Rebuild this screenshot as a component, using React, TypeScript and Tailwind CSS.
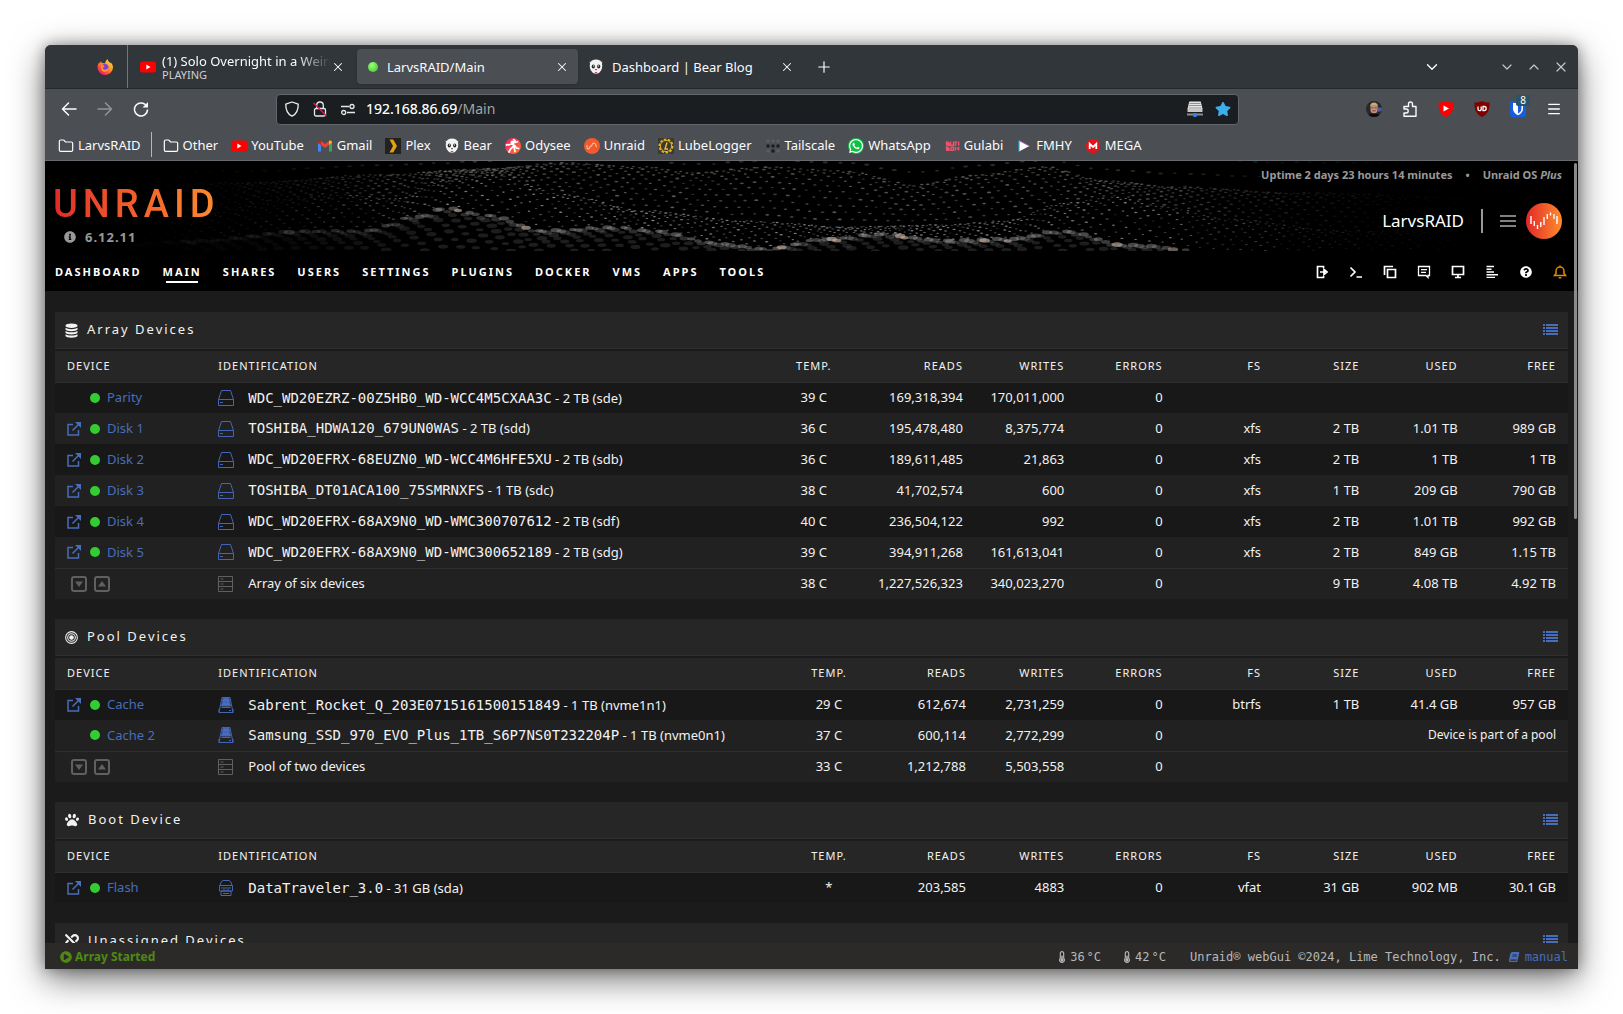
import React from "react";
import { FaBook, FaInfoCircle, FaPaw, FaPlayCircle, FaQuestionCircle, FaStar, FaThermometerHalf, FaUnlink, FaWhatsapp } from "react-icons/fa";
import { ChevronDown, ChevronUp, Folder, Menu, Plus, X } from "lucide-react";

/* ---------- small drawings ---------- */

const YouTubeIcon = () => (
  <svg viewBox="0 0 16 16" className="size-4">
    <rect y="2.5" width="16" height="11" rx="2.5" fill="#f00" />
    <path d="M6.3 5.6v4.8L10.5 8z" fill="#fff" />
  </svg>
);

const BearIcon = () => (
  <svg viewBox="0 0 16 16" className="size-4">
    <path d="M2 4.500C1 2.500 2.500 1 4 1.500 6.500.3 9.500.3 12 1.500c1.500-.5 3 1 2 3 .7 3.500 0 6.500-2.500 9-2 1.700-5 1.700-7 0C2 11 1.300 8 2 4.500z" fill="#f2f2f2" />
    <path d="M4 1.500Q2 .8 1.800 3.500z" fill="#222" />
    <path d="M12 1.500Q14 .8 14.200 3.500z" fill="#222" />
    <ellipse cx="5.300" cy="7.500" rx="1.600" ry="2" fill="#222" />
    <ellipse cx="10.700" cy="7.500" rx="1.600" ry="2" fill="#222" />
    <circle cx="5.500" cy="7" r=".7" fill="#ddd" />
    <circle cx="10.500" cy="7" r=".7" fill="#ddd" />
    <path d="M6.800 10.300h2.400L8 11.600z" fill="#222" />
    <path d="M6.800 13h2.400v1.200H6.800z" fill="#e04055" />
  </svg>
);

const FirefoxIcon = () => (
  <svg viewBox="0 0 16 16" className="size-4">
    <defs>
      <linearGradient id="fox" x1="1" y1="0" x2=".2" y2="1">
        <stop offset="0" stopColor="#fff044" />
        <stop offset=".45" stopColor="#ff9a1f" />
        <stop offset=".8" stopColor="#ff3750" />
        <stop offset="1" stopColor="#e5178c" />
      </linearGradient>
    </defs>
    <path d="M10.500 0c.2 1.800 1.200 2.600 2.300 3.500.4.300.7.700.9 1.100.1-.4.100-.9 0-1.300 1.400 1.400 2.300 3.300 2.300 5.200A7.700 7.700 0 0 1 8.200 16 7.700 7.700 0 0 1 .5 8.400C.5 6.400 1.100 4.500 2.300 3.200c0 .5.100 1 .3 1.300.3-.8.900-1.600 1.600-2.200 0 .7.200 1.200.6 1.700 1.300-.2 2.500.1 3.300.6C8.300 2.700 9.200 1.200 10.500 0z" fill="url(#fox)" />
    <circle cx="8" cy="8.600" r="3.500" fill="#7a3ee8" />
    <path d="M4.300 6.300c1.200-.3 2.500 0 3.200.9-.2.700-1.200.8-1.700 1.200.1 1.500 1.300 2.500 2.800 2.300 1.700-.2 2.700-1.400 2.900-2.900.6 2.600-1.100 5-3.600 5-2.900 0-4.700-2.500-3.600-6.500z" fill="#ff9a2a" />
  </svg>
);

const GmailIcon = () => (
  <svg viewBox="0 0 16 16" className="size-4">
    <path d="M1 4.500v9h3V7z" fill="#4285f4" />
    <path d="M15 4.500v9h-3V7z" fill="#34a853" />
    <path d="M4 7V3l4 3 4-3v4l-4 3z" fill="#ea4335" />
    <path d="M1 4.500C1 2.700 2.800 2 4 3v4L1 4.800z" fill="#c5221f" />
    <path d="M15 4.500C15 2.700 13.200 2 12 3v4l3-2.200z" fill="#fbbc04" />
  </svg>
);

const PlexIcon = () => (
  <svg viewBox="0 0 16 16" className="size-4">
    <rect width="16" height="16" fill="#222" />
    <path d="M4.500 1.500h3.700L12 8l-3.800 6.500H4.500L8 8z" fill="#e5a00d" />
  </svg>
);

const OdyseeIcon = () => (
  <svg viewBox="0 0 16 16" className="size-4">
    <defs>
      <linearGradient id="ody" x1="0" y1="0" x2="1" y2="1">
        <stop offset="0" stopColor="#ef1970" />
        <stop offset="1" stopColor="#ff7b2d" />
      </linearGradient>
    </defs>
    <circle cx="8" cy="8" r="8" fill="url(#ody)" />
    <path d="M8.500 1.500c1.500 0 1.800 1.500 1.300 3l2.700-.8M5 6.500C3.500 7.500 3 6 1.500 7M6.500 6l3 1.500-4 3.500L4 14M9.500 7.500l2 2.500 2 .5M9 9l1 4.500" stroke="#fff" strokeWidth="1.700" fill="none" strokeLinecap="round" />
    <circle cx="7.500" cy="4.500" r="2" fill="#fff" />
  </svg>
);

const UnraidIcon = () => (
  <svg viewBox="0 0 16 16" className="size-4">
    <circle cx="8" cy="8" r="8" fill="#f15a2c" />
    <path d="M3 7v2.500c0 2 2.600 2 2.600 0 0-1.500 2-1 2.400-2.500.4-2.500 3-2.500 3.500-.5L12.500 9" stroke="#ffc3a6" strokeWidth="1.100" fill="none" />
  </svg>
);

const LubeIcon = () => (
  <svg viewBox="0 0 16 16" className="size-4">
    <rect width="16" height="16" fill="#3a3a33" />
    <circle cx="8" cy="8" r="6.600" fill="none" stroke="#e0b020" strokeWidth="1.800" strokeDasharray="2.600 1.500" />
    <circle cx="8" cy="8" r="5.600" fill="none" stroke="#e0b020" strokeWidth="1" />
    <path d="M9 4.500L7 11h3" stroke="#f0c42c" strokeWidth="1.400" fill="none" />
  </svg>
);

const TailscaleIcon = () => (
  <svg viewBox="0 0 16 16" className="size-4">
    {[3, 8, 13].map((y) =>
      [3, 8, 13].map((x) => (
        <circle key={`${x}-${y}`} cx={x} cy={y} r="1.700" fill={y === 8 || (x === 8 && y === 13) ? "#1c1c1c" : "#5c5e61"} />
      ))
    )}
  </svg>
);

const WhatsAppIcon = () => (
  <span className="flex size-4 items-center justify-center rounded-full bg-[#0dc143]">
    <FaWhatsapp className="size-4 text-white" />
  </span>
);

const GulabiIcon = () => (
  <svg viewBox="0 0 16 16" className="size-4" stroke="#f0506a" strokeWidth="1.500" fill="none">
    <path d="M5 4.200H2.500v1.500H5v1.600H2M6.500 3.500v3.800h3V3.500M11.500 7.800V4h1.600M14.600 3.500v4.300" />
    <path d="M5 9.200H2.500v1.500H5v1.600H2M7 9.200h2.500v3.100H7zM11.500 8.800v3.800M13 10.500h1.600M14.600 8.800v3.800" />
  </svg>
);

const FmhyIcon = () => (
  <svg viewBox="0 0 16 16" className="size-4">
    <path d="M3 2.500v11L13.500 8z" fill="#fff" />
    <path d="M3 2.500v11" stroke="#29a8c8" strokeWidth="1.200" />
    <path d="M3 2.500L13.500 8" stroke="#b34fc0" strokeWidth="1" />
  </svg>
);

const MegaIcon = () => (
  <svg viewBox="0 0 16 16" className="size-4">
    <circle cx="8" cy="8" r="7.200" fill="#e5131c" />
    <path d="M4.700 11V5.800L8 9l3.300-3.200V11" stroke="#fff" strokeWidth="1.800" fill="none" />
  </svg>
);

const ShieldIcon = () => (
  <svg viewBox="0 0 16 16" className="size-4" fill="none" stroke="#f0f0f0" strokeWidth="1.300">
    <path d="M8 1L1.800 3.200C1.600 8.600 3.500 13 8 15.200c4.500-2.200 6.400-6.600 6.200-12z" strokeLinejoin="round" />
  </svg>
);

const InsecureIcon = () => (
  <svg viewBox="0 0 16 16" className="size-4" fill="none" stroke="#e8e8e8" strokeWidth="1.300">
    <rect x="2.500" y="7.500" width="11" height="7.500" rx="1.500" />
    <path d="M4.700 7.500V4.300a3.300 3.300 0 0 1 6.600 0v3.200" />
    <path d="M1.500 2L14.500 15" stroke="#e8174b" />
  </svg>
);

const PermissionsIcon = () => (
  <svg viewBox="0 0 16 16" className="size-4" fill="none" stroke="#e8e8e8" strokeWidth="1.300">
    <path d="M1 5.500h8M7 11.500h8" />
    <circle cx="12" cy="5.500" r="2" />
    <circle cx="3.700" cy="11.500" r="2" />
  </svg>
);

const ReloadIcon = () => (
  <svg viewBox="0 0 16 16" className="size-4" fill="none" stroke="#fbfbfe" strokeWidth="1.500">
    <path d="M13.800 5.500A6.500 6.500 0 1 0 14.500 8.500" />
    <path d="M15 1v5.500H9.500z" fill="#fbfbfe" stroke="none" />
  </svg>
);

const ArrowIcon = ({ flip }: { flip?: boolean }) => (
  <svg viewBox="0 0 16 16" className={flip ? "size-4 rotate-180 opacity-40" : "size-4"} fill="none" stroke="#fbfbfe" strokeWidth="1.500">
    <path d="M15 8H1.500M7.500 2L1.500 8l6 6" strokeLinejoin="round" strokeLinecap="round" />
  </svg>
);

const NasIcon = () => (
  <svg viewBox="0 0 16 16" className="size-4">
    <path d="M2 1.500Q2 .5 3 .5h10q1 0 1 1L15.500 8H.5z" fill="#e6e6e6" />
    <path d="M2.500 2.500h11M2 4.500h12M1.500 7h13" stroke="#909090" strokeWidth="1" />
    <rect x=".5" y="7.500" width="15" height="3.500" fill="#c8c8c8" />
    <path d="M0 13.500h16" stroke="#8a8a8a" strokeWidth="2" />
    <rect x="6.200" y="12" width="3.600" height="4" rx="1" fill="#3584e4" />
  </svg>
);

const PuzzleIcon = () => (
  <svg viewBox="0 0 16 16" className="size-4" fill="none" stroke="#fbfbfe" strokeWidth="1.400" strokeLinejoin="round">
    <path d="M2 15.200h12V5.500h-3.500V3a2 2 0 0 0-4 0v2.500H2V8h2.200a1.800 1.800 0 0 1 0 4H2z" />
  </svg>
);

const ShieldBadge = ({ children, fill }: { children: React.ReactNode; fill: string }) => (
  <svg viewBox="0 0 16 16" className="size-4">
    <path d="M8 0c2 1 4.500 1.600 7.500 1.500C15.800 9 13.500 13.500 8 16 2.500 13.500.2 9 .5 1.500 3.500 1.600 6 1 8 0z" fill={fill} />
    {children}
  </svg>
);

const AvatarIcon = () => (
  <svg viewBox="0 0 16 16" className="size-4">
    <clipPath id="face"><circle cx="8" cy="8" r="8" /></clipPath>
    <g clipPath="url(#face)">
      <rect width="16" height="16" fill="#26282c" />
      <path d="M11 6l5 1v3l-4 1z" fill="#4a5a9a" />
      <path d="M4.500 5.500C4.500 1 11.500 1 11.500 5.500v4c0 4-7 4-7 0z" fill="#c58d74" />
      <path d="M4 5.500C4 0 12 0 12 5.500L10.500 4h-5z" fill="#c4ab80" />
      <path d="M5.300 6.800h2M8.700 6.800h2M6.500 9.800h3" stroke="#5a3326" strokeWidth=".8" />
      <path d="M2 16c0-3 3-3.500 6-3.500s6 .5 6 3.500z" fill="#0b0c10" />
    </g>
  </svg>
);

const BitwardenIcon = () => (
  <svg viewBox="0 0 16 16" className="size-4">
    <rect width="16" height="16" rx="2" fill="#175ddc" />
    <path d="M3 2h10v6c0 3-2.500 5-5 6.300C5.500 13 3 11 3 8z" fill="#fff" />
    <path d="M8 3.700h3.400V8c0 2-1.600 3.500-3.400 4.500z" fill="#175ddc" />
  </svg>
);

const DriveIcon = () => (
  <svg viewBox="0 0 16 16" className="size-4" fill="none" stroke="#4266b5" strokeWidth="1">
    <path d="M.5 9.500L3.500.5h9l3 9v6H.5zM.5 9.500h15M2 12.500h3" />
  </svg>
);

const NvmeIcon = () => (
  <svg viewBox="0 0 16 16" className="size-4" fill="none" stroke="#4266b5" strokeWidth="1">
    <path d="M4 .5h8l3 15H1zM1 15.500v-3.500M15 15.500v-3.500" />
    <path d="M5 1.500h6l.5 3h-7zM4.300 5.500h7.400l.8 3.500h-9z" fill="#486dba" />
    <path d="M3.500 10.500h9M11 13.500h2" />
  </svg>
);

const UsbIcon = () => (
  <svg viewBox="0 0 16 16" className="size-4" fill="none" stroke="#4467b3" strokeWidth="1">
    <path d="M2 5.500Q3 .5 5 .5h6q2 0 3 5M1.500 5.500h13v5.500h-13zM3 11h10v4.500H3zM3 8h10M5 10h2M9 10h2M5 13.500h6" />
  </svg>
);

const ServerIcon = () => (
  <svg viewBox="0 0 16 16" className="size-4" fill="none" stroke="#606060" strokeWidth="1">
    <path d="M.5.5h14v15H.5zM.5 5.500h14M.5 10.500h14M2.500 3h3M2.500 8h3M2.500 13h3" />
  </svg>
);

const TargetIcon = () => (
  <svg viewBox="0 0 16 16" className="size-[13px]" fill="none" stroke="#f2f2f2" strokeWidth="1.300">
    <circle cx="8" cy="8" r="7.200" />
    <circle cx="8" cy="8" r="4.700" />
    <circle cx="8" cy="8" r="2.200" fill="#f2f2f2" />
  </svg>
);

const DisksIcon = () => (
  <svg viewBox="0 0 13 15" className="h-[15px] w-[13px]" fill="#f2f2f2">
    <ellipse cx="6.500" cy="2.700" rx="6" ry="2.300" />
    <path d="M.5 4.800c2 1.800 10 1.800 12 0v1.700c-1 2.300-11 2.300-12 0z" />
    <path d="M.5 8c2 1.800 10 1.800 12 0v1.700c-1 2.300-11 2.300-12 0z" />
    <path d="M.5 11.200c2 1.800 10 1.800 12 0v1.700c-1 2.300-11 2.300-12 0z" />
  </svg>
);

const ListIcon = () => (
  <svg viewBox="0 0 15 12" className="h-3 w-[15px]" stroke="#486dba" strokeWidth="2">
    <path d="M0 1h2M3 1h12M0 4h2M3 4h12M0 7h2M3 7h12M0 10h2M3 10h12" />
  </svg>
);

const BrowseIcon = () => (
  <svg viewBox="0 0 14 14" className="size-[14px]" fill="none" stroke="#486dba" strokeWidth="1.500">
    <path d="M6 2.500H1v10.500h10.500V8M5.500 8.500L12 2" />
    <path d="M8 0h6v6z" fill="#486dba" stroke="none" />
  </svg>
);

const SpinIcon = ({ up }: { up?: boolean }) => (
  <svg viewBox="0 0 16 16" className={up ? "size-4 rotate-180" : "size-4"}>
    <rect x="1" y="1" width="14" height="14" rx="2" fill="none" stroke="#606060" strokeWidth="2" />
    <path d="M4 5.500h8L8 11z" fill="#606060" />
  </svg>
);

/* ---------- banner: dotted landscape, four crest lines with dots filled in between ---------- */

type Crest = [number, number][];

const crests: Crest[] = [
  [[0, 30], [200, 22], [330, 14], [440, 8], [520, 2], [600, 6], [650, 12], [720, 6], [800, 10], [870, 24], [930, 14], [1000, 6], [1060, 20], [1130, 26], [1250, 32], [1533, 40]],
  [[0, 66], [150, 54], [240, 38], [300, 34], [350, 38], [400, 20], [450, 14], [520, 34], [600, 50], [700, 60], [800, 66], [900, 64], [960, 60], [1020, 42], [1070, 36], [1120, 46], [1180, 58], [1300, 70], [1533, 76]],
  [[0, 88], [150, 80], [260, 70], [320, 70], [370, 56], [400, 47], [440, 54], [500, 70], [570, 66], [610, 70], [670, 82], [720, 88], [780, 78], [840, 73], [900, 80], [960, 78], [1020, 70], [1080, 84], [1180, 92], [1300, 98], [1533, 100]],
  [[0, 112], [300, 114], [450, 108], [700, 122], [900, 116], [1100, 124], [1533, 124]],
];

const crestAt = (crest: Crest, x: number) => {
  for (let i = 1; i < crest.length; i++) {
    const [x1, y1] = crest[i];
    if (x <= x1) {
      const [x0, y0] = crest[i - 1];
      const t = (x - x0) / (x1 - x0);
      return y0 + (y1 - y0) * (t * t * (3 - 2 * t));
    }
  }
  return crest[crest.length - 1][1];
};

const noise = (n: number) => {
  const s = Math.sin(n * 12.9898) * 43758.5453;
  return s - Math.floor(s);
};

const bannerDots = (() => {
  const dots: { x: number; y: number; rx: number; o: number; warm: boolean }[] = [];
  let n = 0;
  for (let band = -1; band < 3; band++) {
    const rows = band === -1 ? 3 : 11;
    const step = [14, 12, 13, 17][band + 1];
    for (let r = 0; r < rows; r++) {
      const t = r / rows;
      const ease = band === -1 ? t : t * t * (1.6 - 0.6 * t);
      const crowd = Math.max(0, 1 - t * 3.5);
      for (let x = (r * 5) % step; x < 1533; x += step) {
        n++;
        const px = x + noise(n) * 3 - 1;
        const top = band === -1 ? -14 : crestAt(crests[band], px);
        const y = top + (crestAt(crests[band + 1], px) - top) * ease + (noise(n + 7000) - 0.5);
        if (y < 0 || y > 90) continue;
        const edge = Math.min(1, Math.max(0, (px - 40) / 360), Math.max(0, (1500 - px) / 420));
        const warm = band === 2 && crowd > 0.3 && noise(n + 300) > 0.92;
        const base = warm ? 5 : [2.2, 1.8, 1.5, 4.5][band + 1];
        dots.push({
          x: px,
          y,
          rx: base * (0.8 + noise(n + 99) * 0.4),
          o: edge * edge * (warm ? 0.65 : band === 2 ? 0.16 + crowd * 0.24 : 0.24 + noise(n + 40) * 0.25 * (band + 1)),
          warm,
        });
      }
    }
  }
  return dots;
})();

const Banner = () => (
  <svg viewBox="0 0 1533 90" preserveAspectRatio="xMidYMid slice" className="absolute inset-0 size-full">
    {bannerDots.map((d, i) => (
      <ellipse key={i} cx={d.x} cy={d.y} rx={d.rx} ry={d.rx * 0.42} fill={d.warm ? "#c9b3a6" : "#b4b4b4"} opacity={d.o} />
    ))}
  </svg>
);

/* ---------- data ---------- */

const bookmarks = [
  { name: "Other", icon: <Folder className="size-4 text-white" strokeWidth={1.8} /> },
  { name: "YouTube", icon: <YouTubeIcon /> },
  { name: "Gmail", icon: <GmailIcon /> },
  { name: "Plex", icon: <PlexIcon /> },
  { name: "Bear", icon: <BearIcon /> },
  { name: "Odysee", icon: <OdyseeIcon /> },
  { name: "Unraid", icon: <UnraidIcon /> },
  { name: "LubeLogger", icon: <LubeIcon /> },
  { name: "Tailscale", icon: <TailscaleIcon /> },
  { name: "WhatsApp", icon: <WhatsAppIcon /> },
  { name: "Gulabi", icon: <GulabiIcon /> },
  { name: "FMHY", icon: <FmhyIcon /> },
  { name: "MEGA", icon: <MegaIcon /> },
];

const menu = ["Dashboard", "Main", "Shares", "Users", "Settings", "Plugins", "Docker", "VMs", "Apps", "Tools"];

type Device = {
  name?: string;
  browse?: boolean;
  icon: React.ReactNode;
  id?: string;
  info: string;
  temp: string;
  stats: string[];
  note?: string;
};

const arrayDevices: Device[] = [
  { name: "Parity", icon: <DriveIcon />, id: "WDC_WD20EZRZ-00Z5HB0_WD-WCC4M5CXAA3C", info: " - 2 TB (sde)", temp: "39 C", stats: ["169,318,394", "170,011,000", "0", "", "", "", ""] },
  { name: "Disk 1", browse: true, icon: <DriveIcon />, id: "TOSHIBA_HDWA120_679UN0WAS", info: " - 2 TB (sdd)", temp: "36 C", stats: ["195,478,480", "8,375,774", "0", "xfs", "2 TB", "1.01 TB", "989 GB"] },
  { name: "Disk 2", browse: true, icon: <DriveIcon />, id: "WDC_WD20EFRX-68EUZN0_WD-WCC4M6HFE5XU", info: " - 2 TB (sdb)", temp: "36 C", stats: ["189,611,485", "21,863", "0", "xfs", "2 TB", "1 TB", "1 TB"] },
  { name: "Disk 3", browse: true, icon: <DriveIcon />, id: "TOSHIBA_DT01ACA100_75SMRNXFS", info: " - 1 TB (sdc)", temp: "38 C", stats: ["41,702,574", "600", "0", "xfs", "1 TB", "209 GB", "790 GB"] },
  { name: "Disk 4", browse: true, icon: <DriveIcon />, id: "WDC_WD20EFRX-68AX9N0_WD-WMC300707612", info: " - 2 TB (sdf)", temp: "40 C", stats: ["236,504,122", "992", "0", "xfs", "2 TB", "1.01 TB", "992 GB"] },
  { name: "Disk 5", browse: true, icon: <DriveIcon />, id: "WDC_WD20EFRX-68AX9N0_WD-WMC300652189", info: " - 2 TB (sdg)", temp: "39 C", stats: ["394,911,268", "161,613,041", "0", "xfs", "2 TB", "849 GB", "1.15 TB"] },
  { icon: <ServerIcon />, info: "Array of six devices", temp: "38 C", stats: ["1,227,526,323", "340,023,270", "0", "", "9 TB", "4.08 TB", "4.92 TB"] },
];

const poolDevices: Device[] = [
  { name: "Cache", browse: true, icon: <NvmeIcon />, id: "Sabrent_Rocket_Q_203E0715161500151849", info: " - 1 TB (nvme1n1)", temp: "29 C", stats: ["612,674", "2,731,259", "0", "btrfs", "1 TB", "41.4 GB", "957 GB"] },
  { name: "Cache 2", icon: <NvmeIcon />, id: "Samsung_SSD_970_EVO_Plus_1TB_S6P7NS0T232204P", info: " - 1 TB (nvme0n1)", temp: "37 C", stats: ["600,114", "2,772,299", "0"], note: "Device is part of a pool" },
  { icon: <ServerIcon />, info: "Pool of two devices", temp: "33 C", stats: ["1,212,788", "5,503,558", "0", "", "", "", ""] },
];

const bootDevices: Device[] = [
  { name: "Flash", browse: true, icon: <UsbIcon />, id: "DataTraveler_3.0", info: " - 31 GB (sda)", temp: "*", stats: ["203,585", "4883", "0", "vfat", "31 GB", "902 MB", "30.1 GB"] },
];

/* ---------- browser chrome ---------- */

function TabStrip() {
  return (
    <div className="flex h-11 shrink-0 items-stretch border-b border-[#25292c] bg-[#31363b] text-[13px] text-[#fbfbfe]">
      <div className="flex w-[83px] items-center justify-end border-r border-[#70757a] pr-[14px]">
        <button aria-label="Firefox View"><FirefoxIcon /></button>
      </div>
      <div className="my-1 ml-2 flex w-[221px] items-center pr-3 pl-1">
        <YouTubeIcon />
        <div className="ml-[6px] min-w-0 flex-1 overflow-hidden pt-px leading-4 whitespace-nowrap">
          <div className="mask-r-from-80%">(1) Solo Overnight in a Weird</div>
          <div className="text-[11px] leading-3 text-[#d0d1d3]">PLAYING</div>
        </div>
        <button aria-label="Close tab"><X className="size-[14px]" strokeWidth={1.8} /></button>
      </div>
      <div className="my-1 flex w-[221px] items-center rounded bg-[#4b4e53] pr-[9px] pl-2 shadow">
        <span className="mx-[3px] size-[10px] rounded-full bg-radial-[at_40%_30%] from-[#9dff7a] to-[#35c41d]" />
        <span className="ml-[6px] flex-1 pt-[3px]">LarvsRAID/Main</span>
        <button aria-label="Close tab"><X className="size-[14px]" strokeWidth={1.8} /></button>
      </div>
      <div className="my-1 flex w-[221px] items-center pr-[5px] pl-[10px]">
        <BearIcon />
        <span className="ml-2 flex-1 pt-[3px]">Dashboard | Bear Blog</span>
        <button aria-label="Close tab"><X className="size-[14px]" strokeWidth={1.8} /></button>
      </div>
      <button aria-label="New tab" className="ml-4"><Plus className="size-[18px]" strokeWidth={1.6} /></button>
      <div className="ml-auto flex items-center pr-[9px]">
        <button aria-label="List all tabs" className="mr-[58px]"><ChevronDown className="size-[18px]" strokeWidth={1.8} /></button>
        <div className="flex gap-[11px] text-[#c4c6c8]">
          <button aria-label="Minimize"><ChevronDown className="size-4" strokeWidth={1.8} /></button>
          <button aria-label="Maximize"><ChevronUp className="size-4" strokeWidth={1.8} /></button>
          <button aria-label="Close window"><X className="size-4" strokeWidth={1.8} /></button>
        </div>
      </div>
    </div>
  );
}

function Toolbar() {
  return (
    <div className="flex h-10 shrink-0 items-center pr-4 pl-4">
      <div className="flex w-[215px] gap-5">
        <button aria-label="Back"><ArrowIcon /></button>
        <button aria-label="Forward"><ArrowIcon flip /></button>
        <button aria-label="Reload"><ReloadIcon /></button>
      </div>
      <div className="flex h-[31px] min-w-0 flex-1 items-center gap-3 rounded border border-[#63676b] bg-[#1b1e20] px-[7px]">
        <ShieldIcon />
        <InsecureIcon />
        <PermissionsIcon />
        <div className="relative -ml-[2px] flex-1 text-sm">
          {/* the path is dimmed, so the host is painted over the field's own text */}
          <input aria-label="Address" defaultValue="192.168.86.69/Main" className="w-full bg-transparent text-[#a3a5a7] outline-none" />
          <span className="pointer-events-none absolute top-0 left-0 text-[#fbfbfe]" aria-hidden="true">192.168.86.69</span>
        </div>
        <NasIcon />
        <FaStar className="size-4 text-[#3daee9]" />
      </div>
      <div className="ml-[127px] flex items-center gap-5">
        <button aria-label="Profile"><AvatarIcon /></button>
        <button aria-label="Extensions"><PuzzleIcon /></button>
        <button aria-label="YouTube blocker">
          <ShieldBadge fill="#f00"><path d="M5.500 4.500v6l5.500-3z" fill="#fff" /></ShieldBadge>
        </button>
        <button aria-label="uBlock Origin">
          <ShieldBadge fill="#800000"><path d="M4 5.500v2.800q0 1.400 1.600 1.400t1.600-1.400V5.500M9 5.500v4.200h1.200q2 0 2-2.100t-2-2.100z" stroke="#fff" strokeWidth="1.300" fill="none" /></ShieldBadge>
        </button>
        <button aria-label="Bitwarden" className="relative">
          <BitwardenIcon />
          <span className="absolute -top-[6px] left-[6px] w-[14px] rounded-xs bg-[#2c5266] text-center text-[10px] leading-[11px] text-white">8</span>
        </button>
        <button aria-label="Menu"><Menu className="size-4 text-white" strokeWidth={1.9} /></button>
      </div>
    </div>
  );
}

function Bookmarks() {
  return (
    <div className="flex h-8 shrink-0 items-center border-b border-[#66696d] pl-[13px] text-[13px] text-[#fbfbfe]">
      <a href="#" className="flex items-center gap-1 pt-[2px]"><Folder className="size-4" strokeWidth={1.8} />LarvsRAID</a>
      <span className="mr-[11px] ml-[10px] h-[25px] w-px bg-[#b5b7b9]" />
      <div className="flex gap-[13px] pt-[2px]">
        {bookmarks.map((b) => (
          <a key={b.name} href="#" className="flex items-center gap-1">
            {b.icon}
            {b.name}
          </a>
        ))}
      </div>
    </div>
  );
}

/* ---------- page ---------- */

function PageHeader() {
  return (
    <header className="relative flex h-[90px] shrink-0 justify-between overflow-hidden bg-black">
      <Banner />
      <div className="relative pt-5 pl-2">
        <div className="bg-linear-to-r from-[#e22828] to-[#ff8c2f] bg-clip-text font-[Roboto,sans-serif] text-[38px] leading-[46px] font-medium tracking-[5px] text-transparent">UNRAID</div>
        <div className="flex items-center gap-[9px] pl-[11px] font-bold text-[#999]">
          <FaInfoCircle className="size-3" />
          <span className="text-[13px] leading-5 tracking-[1px]">6.12.11</span>
        </div>
      </div>
      <div className="relative flex flex-col items-end pt-[5px] pr-4">
        <div className="flex gap-[13px] text-[11px] leading-[18px] font-bold text-[#999]">
          <span>Uptime 2 days 23 hours 14 minutes</span>
          <span>•</span>
          <span>Unraid OS <i>Plus</i></span>
        </div>
        <div className="mt-[19px] flex items-center text-[17px] text-white">
          <span>LarvsRAID</span>
          <span className="mx-[17px] h-6 w-[2px] bg-[#999]" />
          <button aria-label="Account menu">
            <svg viewBox="0 0 16 12" className="h-3 w-4" stroke="#fff" strokeWidth="1.200">
              <path d="M0 1h16M0 6h16M0 11h16" />
            </svg>
          </button>
          <svg viewBox="0 0 36 36" className="ml-[10px] size-9">
            <defs>
              <linearGradient id="brand">
                <stop offset="0" stopColor="#e22828" />
                <stop offset="1" stopColor="#ff8c2f" />
              </linearGradient>
            </defs>
            <circle cx="18" cy="18" r="18" fill="url(#brand)" />
            <path d="M5 13v8M8.300 18v5M11.500 22v4M14.800 19v5M18 14v8M21.300 11v5M24.500 9.500v3M28 11v5M31 13v8" stroke="#fff" strokeWidth="1.400" />
          </svg>
        </div>
      </div>
    </header>
  );
}

const tools = [
  { label: "Log out", icon: <path d="M8.500 3V1.500h-6v11h6V11M5 7h5M9 4.500L12 7 9 9.500z" fill="none" /> },
  { label: "Terminal", icon: <path d="M1.500 2.500L6 7l-4.500 4.500M7.500 12H13" fill="none" /> },
  { label: "File manager", icon: <path d="M1.500 10V1.500H10M4.500 4.500h8v8h-8z" fill="none" /> },
  { label: "Feedback", icon: <path d="M1.500 1.500h11v9H11v2l-2-2H1.500zM4 4.700h6M4 7.300h5" fill="none" strokeWidth="1.300" /> },
  { label: "System info", icon: <path d="M1.500 1.500h11v8h-11zM7 9.500V12M4 12.500h6" fill="none" /> },
  { label: "Log", icon: <path d="M1.500 1.500H9M1.500 4.200H6.500M1.500 7H9M1.500 9.700H13M1.500 12.400H10" fill="none" strokeWidth="1.400" /> },
];

function PageMenu() {
  return (
    <nav className="flex h-10 shrink-0 items-start justify-between bg-black pr-[11px] pl-[10px] text-white">
      <div className="flex gap-[21px] text-[11px] font-bold tracking-[2px] uppercase">
        {menu.map((m) => (
          <a key={m} href="#" className="flex flex-col items-center pt-3 leading-[18px] whitespace-nowrap">
            {m}
            {m === "Main" && <span className="h-[2px] w-8 bg-white" />}
          </a>
        ))}
      </div>
      <div className="flex gap-5 pt-[14px]">
        {tools.map((t) => (
          <button key={t.label} aria-label={t.label}>
            <svg viewBox="0 0 14 14" className="size-[14px]" stroke="#fff" strokeWidth="1.700">{t.icon}</svg>
          </button>
        ))}
        <button aria-label="Help"><FaQuestionCircle className="size-[14px] p-px" /></button>
        <button aria-label="Notifications">
          <svg viewBox="0 0 14 14" className="size-[14px]" fill="none" stroke="#e68a00" strokeWidth="1.500">
            <path d="M1.500 10.500h11L11 8.500V6a4 4 0 0 0-8 0v2.500zM7 2V.5M5.700 12.700h2.600" />
          </svg>
        </button>
      </div>
    </nav>
  );
}

function SectionTitle({ icon, title }: { icon: React.ReactNode; title: string }) {
  return (
    <div className="mt-5 flex h-[37px] items-center border-b border-[#2f2f2f] bg-[#262626] px-[10px] text-[#f2f2f2]">
      {icon}
      <h2 className="ml-[9px] flex-1 text-[13px] tracking-[2px]">{title}</h2>
      <button aria-label={`${title} settings`}><ListIcon /></button>
    </div>
  );
}

function DeviceTable({ devices, wide }: { devices: Device[]; wide?: boolean }) {
  return (
    <table className="mt-[2px] w-full table-fixed text-right text-[13px] whitespace-nowrap text-[#f2f2f2]">
      <colgroup>
        <col className="w-[10%]" />
        <col />
        <col className="w-[6.5%]" />
        <col className={wide ? "w-[7.3%]" : "w-[6.5%]"} />
        <col className={wide ? "w-[6.7%]" : "w-[6.5%]"} />
        <col className="w-[6.5%]" />
        <col className="w-[6.5%]" />
        <col className="w-[6.5%]" />
        <col className="w-[6.5%]" />
        <col className="w-[6.5%]" />
      </colgroup>
      <thead className="border-b border-[#2f2f2f] bg-[#262626] text-[11px] tracking-[1px] uppercase">
        <tr className="h-[31px]">
          <th className="pl-3 text-left font-normal">Device</th>
          <th className="pl-3 text-left font-normal">Identification</th>
          <th className="pr-[3px] text-center font-normal">Temp.</th>
          {["Reads", "Writes", "Errors", "FS", "Size", "Used", "Free"].map((h) => (
            <th key={h} className="pr-3 font-normal">{h}</th>
          ))}
        </tr>
      </thead>
      <tbody>
        {devices.map((d) => (
          <tr key={d.info + d.id} className={d.name ? "h-[31px] odd:bg-[#191818] even:bg-[#212121]" : "h-[31px] border-t border-[#2f2f2f] bg-[#212121]"}>
            <td className="pl-3">
              {d.name ? (
                <div className="flex items-center text-[#486dba]">
                  <span className="w-[23px]">
                    {d.browse && <a href="#" aria-label={`Browse ${d.name}`}><BrowseIcon /></a>}
                  </span>
                  <span className="size-[10px] rounded-full bg-[#33cc33]" />
                  <a href="#" className="ml-[7px]">{d.name}</a>
                </div>
              ) : (
                <div className="flex gap-[7px] pl-1">
                  <button aria-label="Spin down"><SpinIcon /></button>
                  <button aria-label="Spin up"><SpinIcon up /></button>
                </div>
              )}
            </td>
            <td className="pl-3">
              <div className="flex items-center gap-[14px]">
                {d.icon}
                <span className="whitespace-pre">
                  {d.id && <span className="font-['DejaVu_Sans_Mono',monospace] text-sm leading-5">{d.id}</span>}
                  {d.info}
                </span>
              </div>
            </td>
            <td className="pr-[3px] text-center">{d.temp}</td>
            {d.stats.map((s, i) => (
              <td key={i} className="pr-3">{s}</td>
            ))}
            {d.note && <td colSpan={4} className="pr-3 text-xs">{d.note}</td>}
          </tr>
        ))}
      </tbody>
    </table>
  );
}

function Footer() {
  return (
    <footer className="flex h-[26px] shrink-0 items-center justify-between bg-[#2b2a29] pt-px pr-[10px] pl-[15px]">
      <div className="flex items-center gap-[3px] text-xs font-bold text-[#4f8a10]">
        <FaPlayCircle className="size-3" />
        Array Started
      </div>
      <div className="flex items-center font-['DejaVu_Sans_Mono',monospace] text-xs text-[#b8b8b8]">
        <FaThermometerHalf className="mr-[2px] size-3" />
        <span>36</span><span className="ml-[2px]">°C</span>
        <FaThermometerHalf className="mr-[2px] ml-5 size-3" />
        <span>42</span><span className="ml-[2px]">°C</span>
        <span className="ml-6">Unraid® webGui ©2024, Lime Technology, Inc.</span>
        <a href="#" className="ml-2 flex items-center gap-[6px] text-[#486dba]"><FaBook className="size-[10px] -skew-x-12" />manual</a>
      </div>
    </footer>
  );
}

export default function App() {
  return (
    <div className="flex h-screen bg-white p-[45px] font-['Noto_Sans',sans-serif]">
      <div className="flex min-w-0 flex-1 flex-col overflow-hidden rounded-t-md bg-[#4b4e53] shadow-[0_10px_34px_rgba(0,0,0,0.55),0_0_14px_rgba(0,0,0,0.35)]">
        <TabStrip />
        <Toolbar />
        <Bookmarks />
        <div className="relative flex min-h-0 flex-1 flex-col bg-[#1c1b1b]">
          <PageHeader />
          <PageMenu />
          <main className="min-h-0 flex-1 overflow-hidden px-[10px] pt-px">
            <SectionTitle icon={<DisksIcon />} title="Array Devices" />
            <DeviceTable devices={arrayDevices} wide />
            <SectionTitle icon={<TargetIcon />} title="Pool Devices" />
            <DeviceTable devices={poolDevices} />
            <SectionTitle icon={<FaPaw className="size-[14px]" />} title="Boot Device" />
            <DeviceTable devices={bootDevices} />
            <SectionTitle icon={<FaUnlink className="size-[14px]" />} title="Unassigned Devices" />
          </main>
          <Footer />
          <span className="absolute top-[2px] right-px h-[356px] w-[3px] rounded-full bg-[#8a8a8a]" />
        </div>
      </div>
    </div>
  );
}
